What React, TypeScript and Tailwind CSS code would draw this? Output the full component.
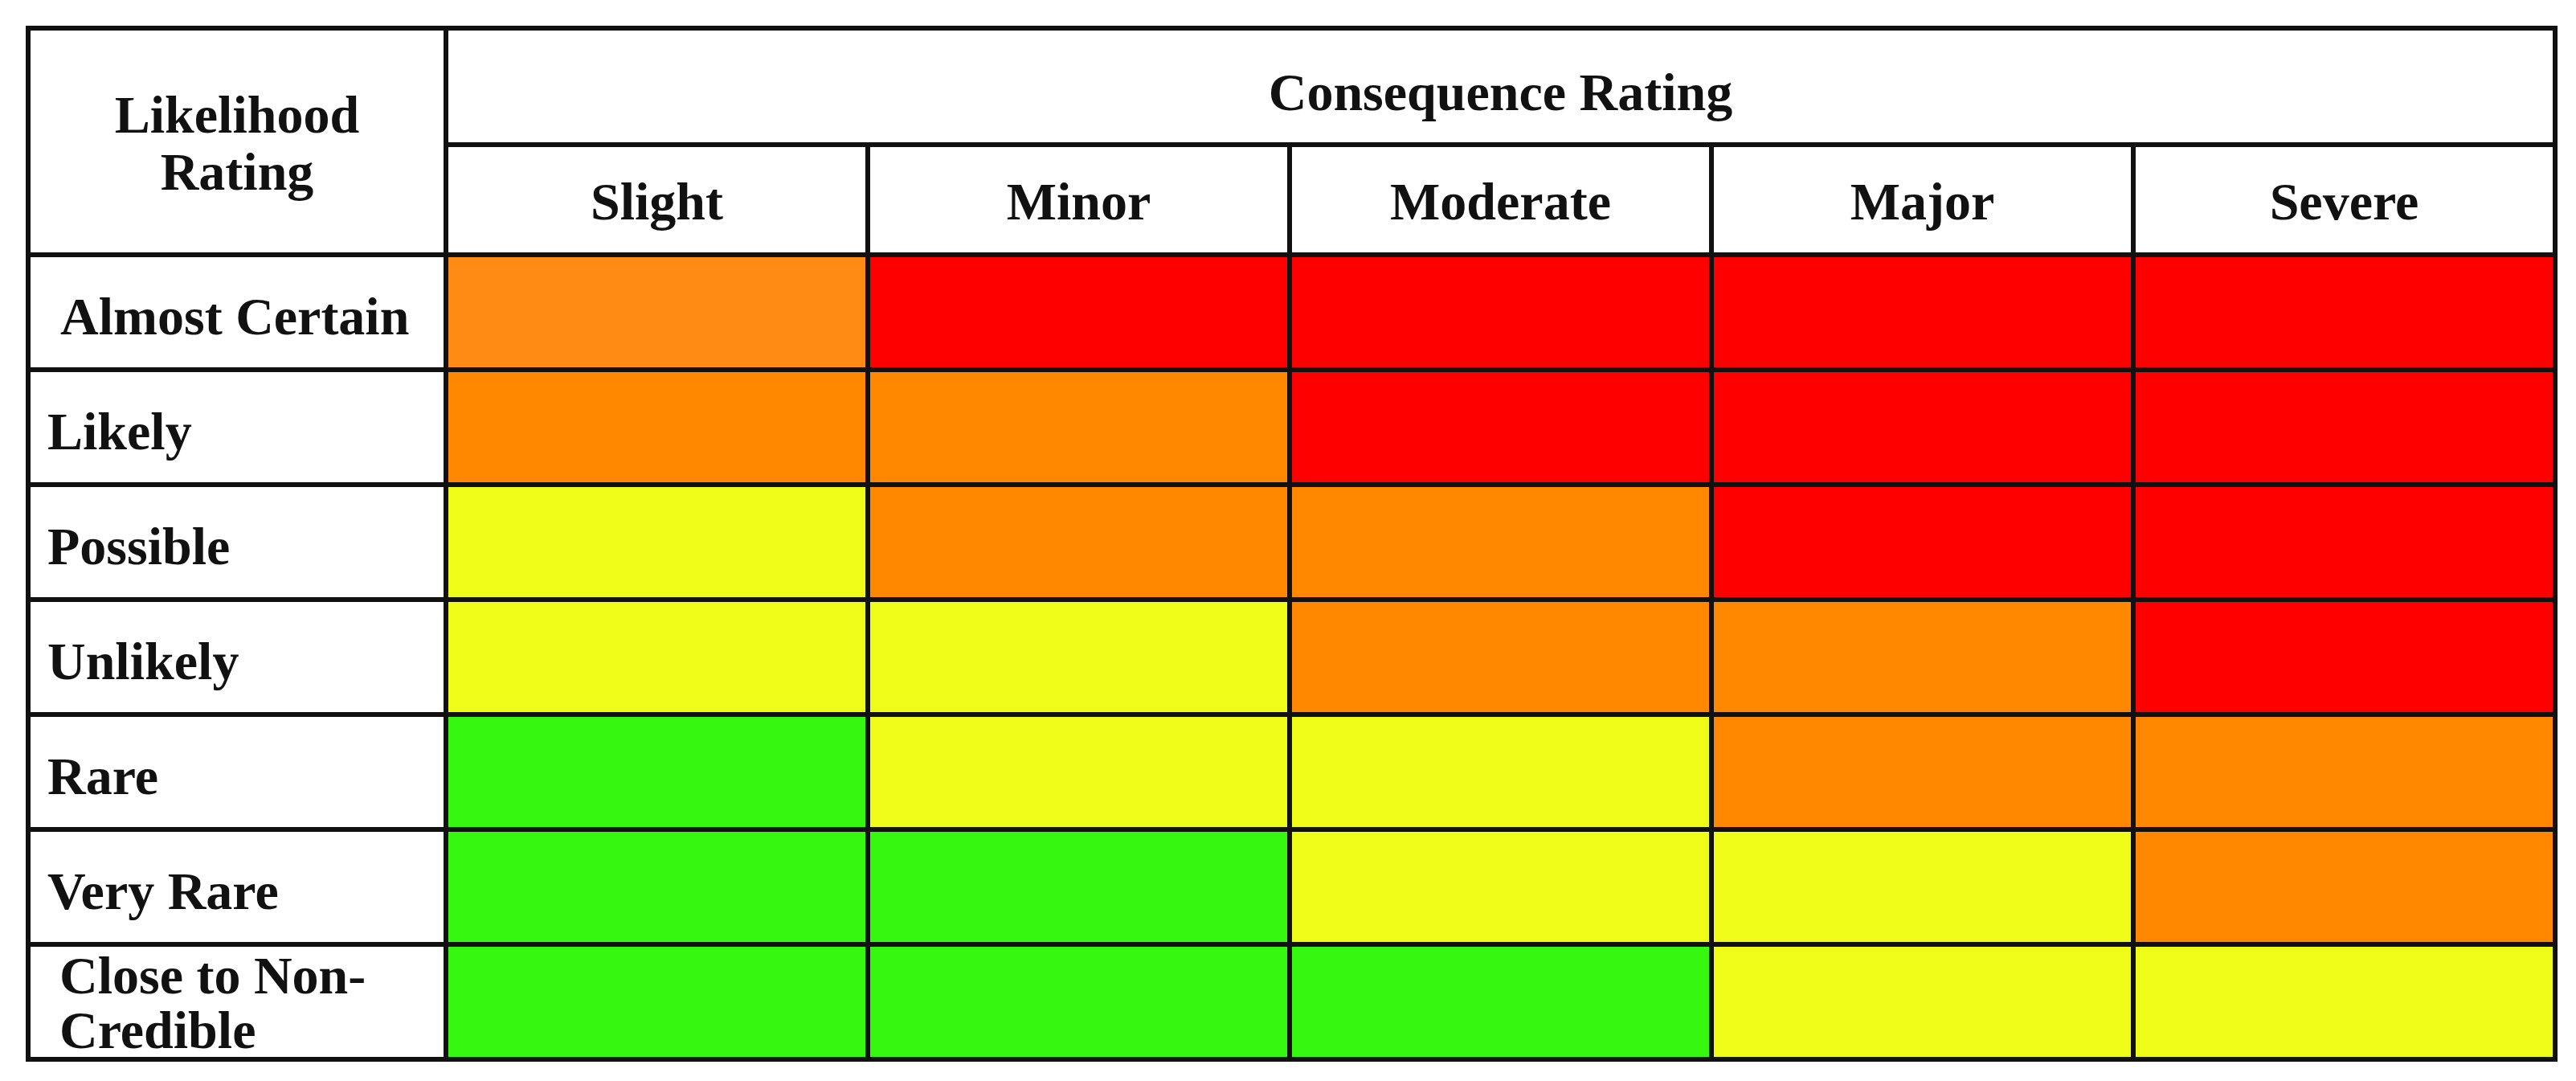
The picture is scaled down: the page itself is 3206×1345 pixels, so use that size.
const COLORS: Record<string, string> = {
  o1: 'bg-[#fd8a12]',
  o: 'bg-[#ff8800]',
  r: 'bg-[#ff0000]',
  y: 'bg-[#effc17]',
  g: 'bg-[#35f70f]',
};

const CONSEQUENCES = ['Slight', 'Minor', 'Moderate', 'Major', 'Severe'];

const ROWS: { label: string[]; pad: string; cells: string[] }[] = [
  { label: ['Almost Certain'], pad: 'pl-[37px]', cells: ['o1', 'r', 'r', 'r', 'r'] },
  { label: ['Likely'], pad: 'pl-[21px]', cells: ['o', 'o', 'r', 'r', 'r'] },
  { label: ['Possible'], pad: 'pl-[21px]', cells: ['y', 'o', 'o', 'r', 'r'] },
  { label: ['Unlikely'], pad: 'pl-[21px]', cells: ['y', 'y', 'o', 'o', 'r'] },
  { label: ['Rare'], pad: 'pl-[21px]', cells: ['g', 'y', 'y', 'o', 'o'] },
  { label: ['Very Rare'], pad: 'pl-[21px]', cells: ['g', 'g', 'y', 'y', 'o'] },
  { label: ['Close to Non-', 'Credible'], pad: 'pl-[36px]', cells: ['g', 'g', 'g', 'y', 'y'] },
];

export default function App() {
  return (
    <div className="min-h-screen bg-white p-[32px] font-['Liberation_Serif',serif] font-bold text-[66px] text-[#111]">
      <div className="grid w-[3151px] grid-cols-[514px_repeat(5,519px)] grid-rows-[139px_131px_repeat(7,137px)] gap-[6px] border-[6px] border-[#111] bg-[#111]">
        {/* header */}
        <div className="row-span-2 flex flex-col items-center justify-center bg-white pt-[4px] leading-[71px]">
          <span>Likelihood</span>
          <span>Rating</span>
        </div>
        <div className="col-span-5 flex items-center justify-center bg-white pt-[14px]">
          Consequence Rating
        </div>
        {CONSEQUENCES.map((c) => (
          <div key={c} className="flex items-center justify-center bg-white pt-[4px]">
            {c}
          </div>
        ))}

        {/* matrix rows */}
        {ROWS.map((row) => (
          <div key={row.label.join(' ')} className="contents">
            <div
              className={`flex flex-col justify-center bg-white ${row.pad} ${
                row.label.length > 1 ? 'leading-[68px] pt-[2px]' : 'pt-[10px]'
              }`}
            >
              {row.label.map((l) => (
                <span key={l}>{l}</span>
              ))}
            </div>
            {row.cells.map((c, i) => (
              <div key={i} className={COLORS[c]} />
            ))}
          </div>
        ))}
      </div>
    </div>
  );
}
